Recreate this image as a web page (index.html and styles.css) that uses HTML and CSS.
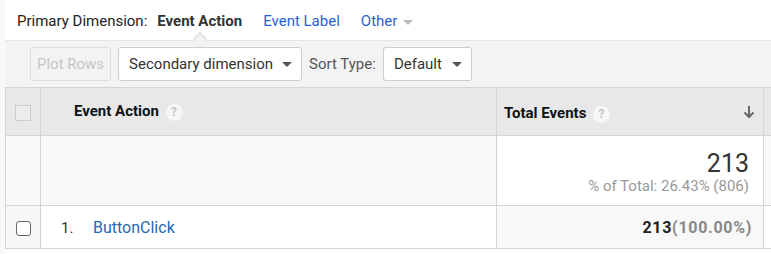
FILE: index.html
```html
<!DOCTYPE html>
<html lang="en">
<head>
  <meta charset="UTF-8">
  <title>Event Actions</title>
  <link rel="stylesheet" href="styles.css">
</head>
<body>
  <div class="panel">
    <div class="dimensions">
      <span class="dim-label">Primary Dimension:</span>
      <span class="dim-item active">Event Action</span>
      <a class="dim-item" href="#">Event Label</a>
      <a class="dim-item other" href="#">Other <span class="caret small"></span></a>
    </div>

    <div class="toolbar">
      <button class="btn" disabled>Plot Rows</button>
      <button class="btn select wide">Secondary dimension <span class="caret"></span></button>
      <span class="sort-label">Sort Type:</span>
      <button class="btn select narrow">Default <span class="caret"></span></button>
    </div>

    <table class="report">
      <colgroup>
        <col class="c-check">
        <col class="c-dim">
        <col class="c-metric">
        <col>
      </colgroup>
      <thead>
        <tr>
          <th class="check-cell"><span class="box head-box"></span></th>
          <th class="dim-head">Event Action <span class="help">?</span></th>
          <th class="metric-head">
            <span>Total Events <span class="help">?</span></span>
            <svg class="sort-arrow" width="12" height="14" viewBox="0 0 12 14"><path d="M6 1v11M1.5 7.5L6 12l4.5-4.5" fill="none" stroke="#666" stroke-width="2"/></svg>
          </th>
          <th></th>
        </tr>
      </thead>
      <tbody>
        <tr class="totals">
          <td></td>
          <td></td>
          <td class="total-cell">
            <div class="big">213</div>
            <div class="share">% of Total: 26.43% (806)</div>
          </td>
          <td></td>
        </tr>
        <tr class="row">
          <td class="check-cell"><span class="box"></span></td>
          <td><span class="idx">1.</span><a href="#" class="dim-link">ButtonClick</a></td>
          <td class="value-cell"><b>213</b><span class="pct">(100.00%)</span></td>
          <td></td>
        </tr>
      </tbody>
    </table>
  </div>
</body>
</html>
```

FILE: styles.css
```css
body {
  margin: 0;
  background: #f8f8f8;
  font-family: Roboto, "Liberation Sans", sans-serif;
  font-size: 15px;
  color: #333;
  overflow: hidden;
}
.panel {
  margin-left: 5px;
  background: #fff;
  min-height: 254px;
}
.dimensions {
  height: 40px;
  display: flex;
  align-items: center;
  padding-left: 12px;
  padding-top: 2px;
  box-sizing: border-box;
}
.dim-label {
  color: #222;
  margin-right: 10px;
}
.dim-item {
  position: relative;
  margin-right: 21px;
  color: #2a62d6;
  text-decoration: none;
}
.dim-item.active {
  font-weight: bold;
  color: #333;
}
.dim-item.active::after {
  content: "";
  position: absolute;
  left: 50%;
  bottom: -14px;
  width: 9px;
  height: 9px;
  margin-left: -5px;
  background: #f3f3f3;
  border-left: 1px solid #ddd;
  border-top: 1px solid #ddd;
  transform: rotate(45deg);
}
.caret {
  display: inline-block;
  width: 0;
  height: 0;
  border-left: 5px solid transparent;
  border-right: 5px solid transparent;
  border-top: 5px solid #555;
  vertical-align: middle;
}
.caret.small {
  border-top-color: #bbb;
  margin-left: 2px;
}
.toolbar {
  height: 47px;
  background: #f3f3f3;
  border-top: 1px solid #e4e4e4;
  box-sizing: border-box;
  display: flex;
  align-items: center;
  padding-left: 25px;
  gap: 7px;
}
.btn {
  height: 34px;
  padding: 0 6px;
  display: inline-flex;
  align-items: center;
  white-space: nowrap;
  font-family: inherit;
  font-size: 15px;
  color: #333;
  background: #fff;
  border: 1px solid #ccc;
  border-radius: 3px;
}
.btn:disabled {
  background: #f3f3f3;
  border-color: #ddd;
  color: #c6c6c6;
}
.btn.select {
  justify-content: space-between;
  padding: 0 9px 0 10px;
}
.btn.wide {
  width: 184px;
}
.btn.narrow {
  width: 89px;
}
.sort-label {
  color: #555;
}
.report {
  border-collapse: collapse;
  width: 800px;
  table-layout: fixed;
}
.c-check { width: 35px; }
.c-dim { width: 456px; }
.c-metric { width: 267px; }
.report th, .report td {
  border: 1px solid #d4d4d4;
  padding: 0;
}
.report thead tr {
  height: 48px;
  background: #e8e8e8;
}
.report th {
  text-align: left;
  font-weight: bold;
  color: #111;
}
.report .check-cell {
  text-align: center;
}
.box {
  display: inline-block;
  width: 13px;
  height: 13px;
  border: 1.5px solid #666;
  border-radius: 3px;
  vertical-align: middle;
  background: #fff;
}
.box.head-box {
  width: 14px;
  height: 14px;
  border: 1px solid #ccc;
  border-radius: 0;
  background: #ececec;
}
.report .dim-head {
  padding-left: 33px;
}
.help {
  display: inline-block;
  width: 17px;
  height: 17px;
  margin-left: 3px;
  border-radius: 50%;
  background: #f6f6f6;
  color: #c4c4c4;
  font-size: 12px;
  line-height: 17px;
  text-align: center;
  vertical-align: middle;
}
.report .metric-head {
  padding: 4px 8px 0 7px;
}
.sort-arrow {
  float: right;
  margin-top: 1px;
}
.totals {
  height: 70px;
  background: #f8f8f8;
}
.report .total-cell {
  background: #fff;
  text-align: right;
  padding: 2px 14px 0 0;
}
.big {
  font-size: 25px;
  line-height: 28px;
  color: #333;
}
.share {
  color: #999;
  font-size: 15px;
  line-height: 16px;
}
.row {
  height: 43px;
}
.row .check-cell {
  background: #f7f7f7;
}
.idx {
  display: inline-block;
  width: 32px;
  margin-left: 20px;
}
.dim-link {
  color: #2868b0;
  text-decoration: none;
  font-size: 16px;
}
.report .value-cell {
  background: #f8f8f8;
  text-align: right;
  padding-right: 11px;
  font-size: 16px;
  letter-spacing: 0.7px;
}
.value-cell b {
  color: #222;
}
.pct {
  color: #888;
  font-weight: bold;
}
```
